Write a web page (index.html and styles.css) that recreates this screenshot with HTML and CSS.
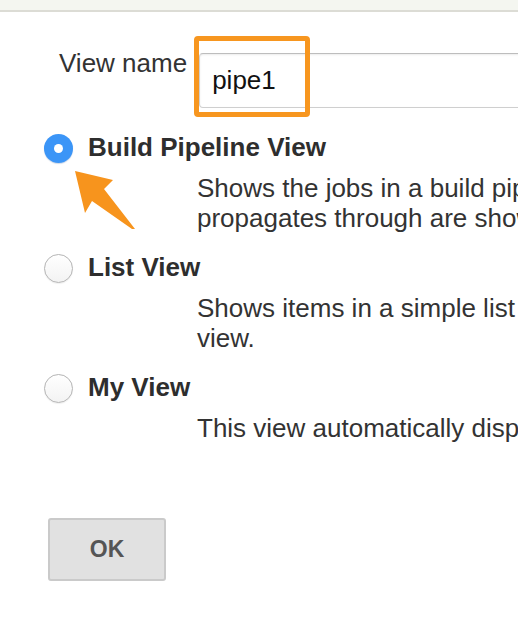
FILE: index.html
```html
<!DOCTYPE html>
<html lang="en">
<head>
<meta charset="utf-8">
<title>New View</title>
<link rel="stylesheet" href="styles.css">
</head>
<body>
<div class="page">
  <div class="topbar"></div>
  <div class="name-row">
    <label class="name-label" for="name">View name</label>
    <div class="input-wrap">
      <input id="name" class="name-input" type="text" value="pipe1">
      <div class="highlight"></div>
    </div>
  </div>

  <div class="options">
    <div class="option">
      <div class="opt-head">
        <span class="radio radio-on"></span>
        <span class="opt-title">Build Pipeline View</span>
      </div>
      <div class="opt-desc">Shows the jobs in a build pipeline view. The complete pipeline of jobs that a version<br>propagates through are shown as a row in the view.</div>
    </div>
    <div class="option">
      <div class="opt-head">
        <span class="radio"></span>
        <span class="opt-title">List View</span>
      </div>
      <div class="opt-desc">Shows items in a simple list format. You can choose which jobs are to be displayed in which<br>view.</div>
    </div>
    <div class="option">
      <div class="opt-head">
        <span class="radio"></span>
        <span class="opt-title">My View</span>
      </div>
      <div class="opt-desc">This view automatically displays all the jobs that the current user has an access to.</div>
    </div>
  </div>

  <div class="actions">
    <button class="ok-btn" type="button">OK</button>
  </div>

  <svg class="arrow" width="70" height="70" viewBox="70 165 70 70" aria-hidden="true">
    <polygon points="75,171 113,180 104,189 135,229 132,229 92,201 85,213" fill="#f7941d"/>
  </svg>
</div>
</body>
</html>
```
FILE: styles.css
```css
html, body {
  margin: 0;
  padding: 0;
  width: 518px;
  height: 622px;
  overflow: hidden;
  background: #ffffff;
}

.page {
  position: relative;
  width: 518px;
  height: 622px;
  overflow: hidden;
  font-family: "Liberation Sans", Helvetica, Arial, sans-serif;
  font-size: 26px;
  line-height: 30px;
  color: #333333;
}

.topbar {
  height: 10px;
  background: #f4f6f0;
  border-bottom: 2px solid #dcdcd5;
}

.name-row {
  display: flex;
  align-items: flex-start;
  margin-top: 36px;
  padding-left: 59px;
}

.name-label {
  white-space: nowrap;
  color: #333333;
}

.input-wrap {
  position: relative;
  margin-left: 12px;
  margin-top: 5px;
  flex-shrink: 0;
}

.name-input {
  display: block;
  box-sizing: border-box;
  width: 380px;
  height: 55px;
  margin: 0;
  padding: 0 12px;
  border: 1px solid #cfcfcf;
  border-top-color: #bdbdbd;
  border-radius: 4px;
  box-shadow: inset 0 1px 2px rgba(0, 0, 0, 0.08);
  font-family: "Liberation Sans", Helvetica, Arial, sans-serif;
  font-size: 26px;
  color: #111111;
  background: #ffffff;
  outline: none;
}

.highlight {
  position: absolute;
  left: -5px;
  top: -17px;
  width: 116px;
  height: 81px;
  box-sizing: border-box;
  border: 5px solid #f7961f;
  border-radius: 4px;
}

.options {
  margin-top: 24px;
  padding-left: 44px;
}

.option {
  margin-bottom: 19px;
}

.opt-head {
  display: flex;
  align-items: center;
  height: 30px;
}

.radio {
  box-sizing: border-box;
  width: 29px;
  height: 29px;
  margin-top: 2px;
  border-radius: 50%;
  border: 1px solid #b4b4b4;
  background: linear-gradient(#ffffff, #f3f3f3);
  box-shadow: 0 1px 1px rgba(0, 0, 0, 0.06);
  flex-shrink: 0;
}

.radio-on {
  position: relative;
  border: none;
  background: #3b95f7;
  box-shadow: 0 1px 1px rgba(0, 60, 140, 0.2);
}

.radio-on::after {
  content: "";
  position: absolute;
  left: 10px;
  top: 10px;
  width: 9px;
  height: 9px;
  border-radius: 50%;
  background: #ffffff;
}

.opt-title {
  margin-left: 15px;
  font-weight: bold;
  white-space: nowrap;
  color: #2e2e2e;
}

.opt-desc {
  margin-top: 11px;
  margin-left: 153px;
  white-space: nowrap;
  color: #333333;
}

.actions {
  margin-top: 75px;
  padding-left: 48px;
}

.ok-btn {
  box-sizing: border-box;
  width: 118px;
  height: 63px;
  margin: 0;
  padding: 0;
  border: 2px solid #cacaca;
  border-radius: 3px;
  background: #e1e1e1;
  font-family: "Liberation Sans", Helvetica, Arial, sans-serif;
  font-size: 23px;
  font-weight: bold;
  color: #555555;
}

.arrow {
  position: absolute;
  left: 70px;
  top: 165px;
}
```
